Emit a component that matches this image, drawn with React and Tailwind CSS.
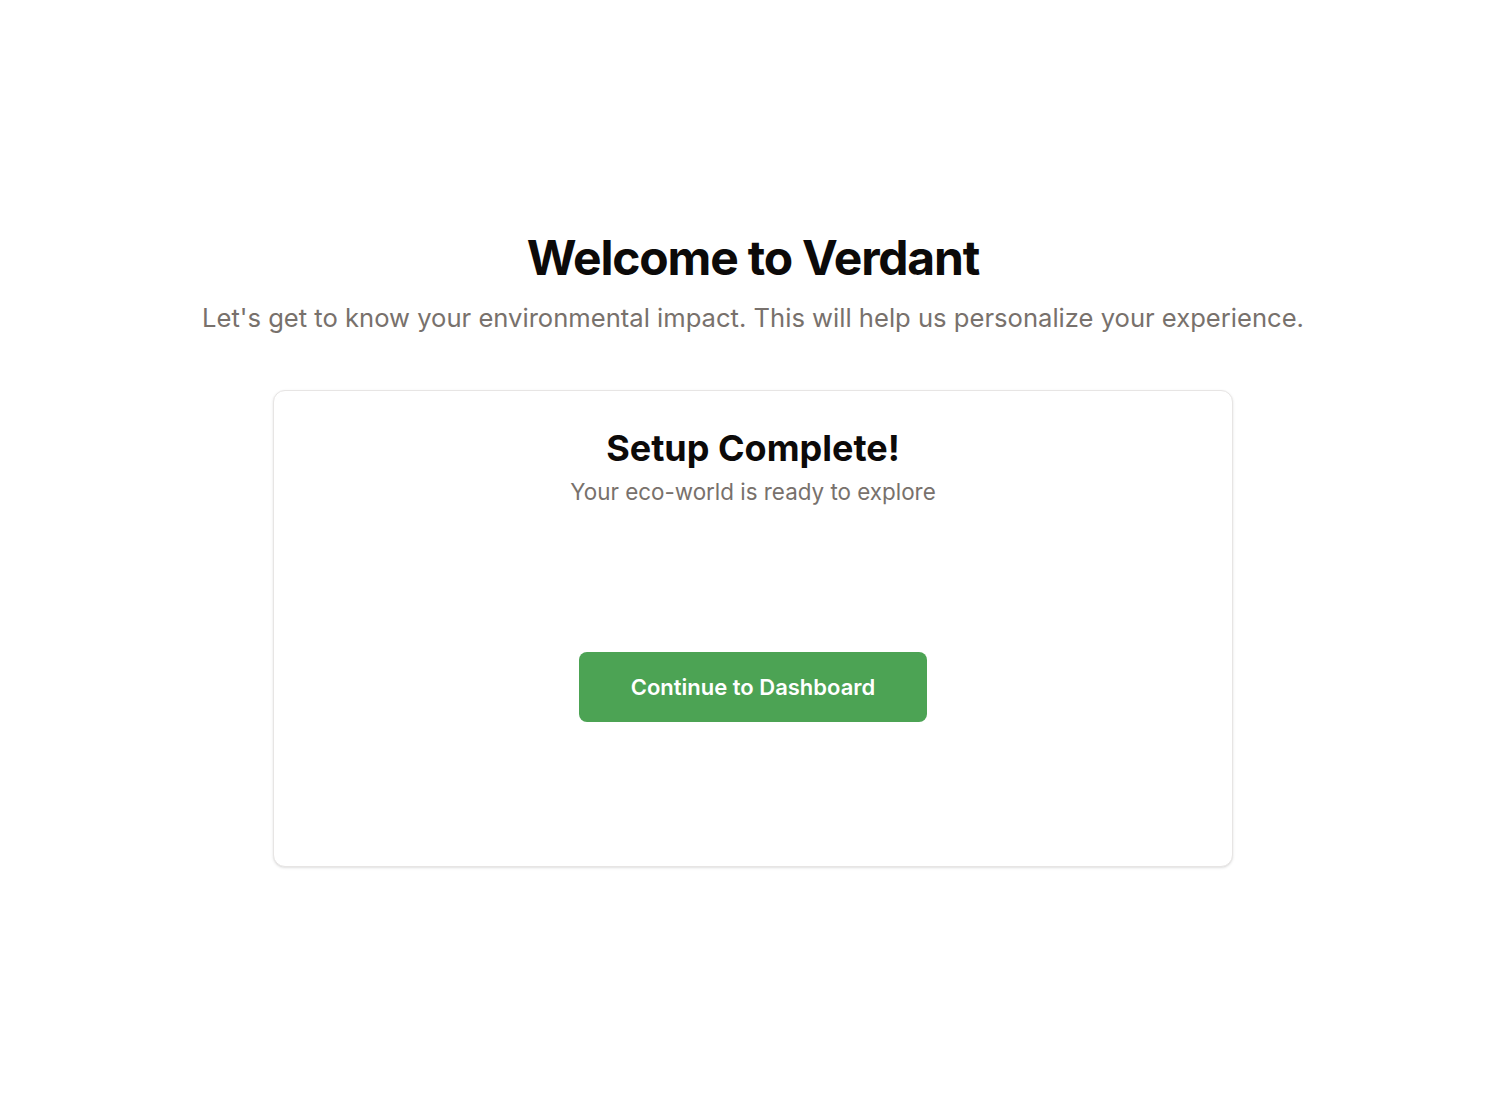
import React from 'react';

const App = () => {
  return (
    <div
      className="min-h-screen bg-white flex flex-col items-center justify-center pl-[30px] pr-6 pb-[5px]"
      style={{ fontFamily: 'Inter, "Noto Sans", sans-serif' }}
    >
      <div className="text-center">
        <h1 className="text-5xl leading-none font-bold text-[#0c0a09] tracking-tight">Welcome to Verdant</h1>
        <p className="mt-5 text-[25.6px] leading-8 text-[#78716c]">
          Let's get to know your environmental impact. This will help us personalize your experience.
        </p>
      </div>

      <div className="mt-14 w-[960px] rounded-xl border border-[#e7e5e4] bg-white shadow-sm px-8 pt-[37px] text-center">
        <h2 className="text-4xl font-bold text-[#0c0a09]">Setup Complete!</h2>
        <p className="mt-2 text-[22.4px] leading-8 text-[#78716c]">Your eco-world is ready to explore</p>

        <div className="flex justify-center py-[144px]">
          <button className="rounded-lg bg-[#4ca354] px-[52px] py-[21px] text-[22px] font-semibold text-white leading-7">
            Continue to Dashboard
          </button>
        </div>
      </div>
    </div>
  );
};

export default App;
